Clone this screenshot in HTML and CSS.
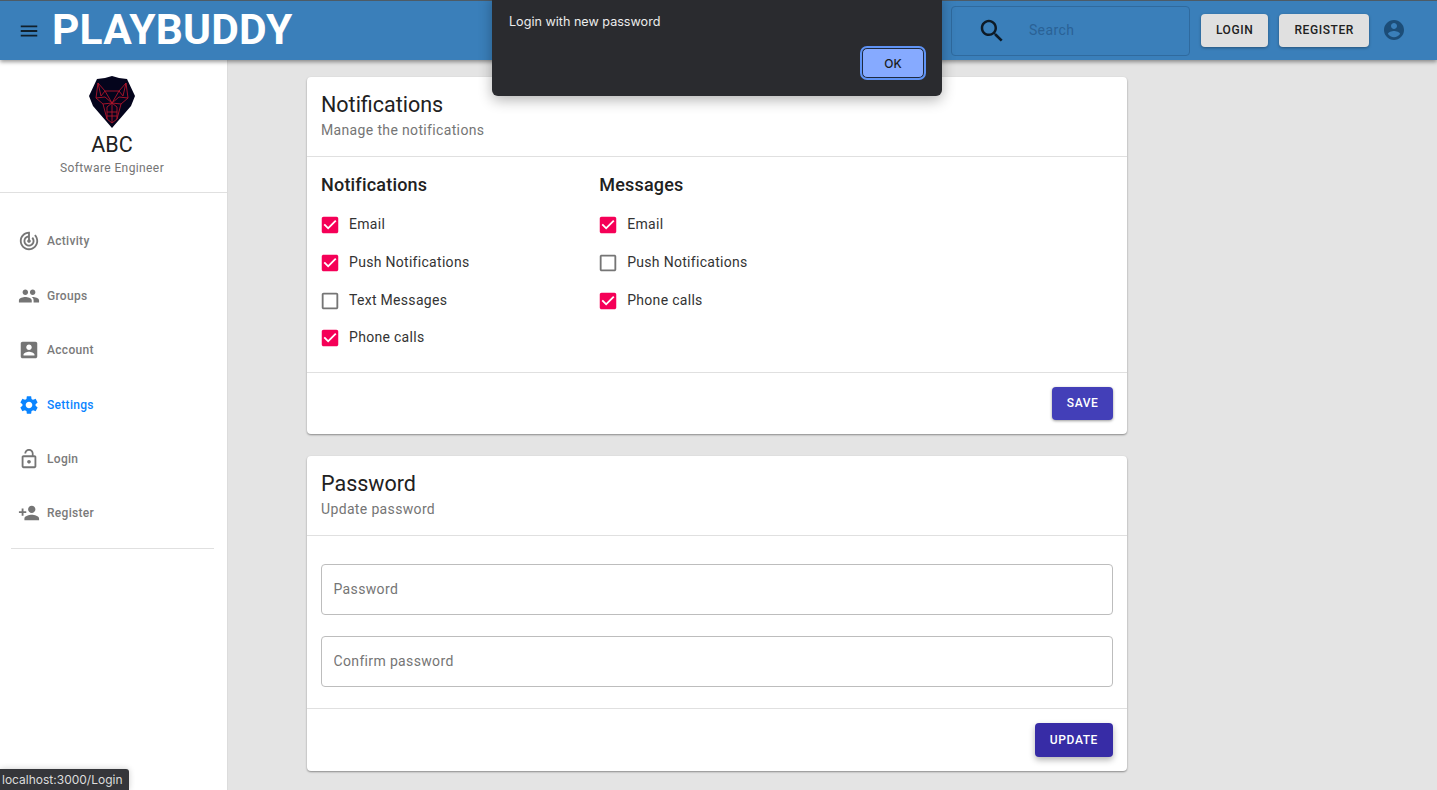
FILE: index.html
```html
<!doctype html>
<html>
<head>
  <title>Playbuddy</title>
  <meta charset="utf-8">
  <link rel="stylesheet" href="styles.css">
</head>
<body>
  <svg class="defs" width="0" height="0">
    <symbol id="i-menu" viewBox="0 0 24 24"><path d="M3 18h18v-2H3v2zm0-5h18v-2H3v2zm0-7v2h18V6H3z"/></symbol>
    <symbol id="i-search" viewBox="0 0 24 24"><path d="M15.5 14h-.79l-.28-.27C15.41 12.59 16 11.11 16 9.5 16 5.91 13.09 3 9.5 3S3 5.91 3 9.5 5.91 16 9.5 16c1.61 0 3.09-.59 4.23-1.57l.27.28v.79l5 4.99L20.49 19l-4.99-5zm-6 0C7.01 14 5 11.99 5 9.5S7.01 5 9.5 5 14 7.01 14 9.5 11.99 14 9.5 14z"/></symbol>
    <symbol id="i-user" viewBox="0 0 24 24"><path d="M12 2C6.48 2 2 6.48 2 12s4.48 10 10 10 10-4.48 10-10S17.52 2 12 2zm0 3c1.66 0 3 1.34 3 3s-1.34 3-3 3-3-1.34-3-3 1.34-3 3-3zm0 14.2c-2.5 0-4.71-1.28-6-3.22.03-1.99 4-3.08 6-3.08 1.99 0 5.97 1.09 6 3.08-1.29 1.94-3.5 3.22-6 3.22z"/></symbol>
    <symbol id="i-activity" viewBox="0 0 24 24"><path d="M19.07 4.93l-1.41 1.41C19.1 7.79 20 9.79 20 12c0 4.42-3.58 8-8 8s-8-3.58-8-8c0-4.08 3.05-7.44 7-7.93v2.02C8.16 6.57 6 9.03 6 12c0 3.31 2.69 6 6 6s6-2.69 6-6c0-1.66-.67-3.16-1.76-4.24l-1.41 1.41C15.55 9.9 16 10.9 16 12c0 2.21-1.79 4-4 4s-4-1.79-4-4c0-1.86 1.28-3.41 3-3.86v2.14c-.6.35-1 .98-1 1.72 0 1.1.9 2 2 2s2-.9 2-2c0-.74-.4-1.38-1-1.72V2h-1C6.48 2 2 6.48 2 12s4.48 10 10 10 10-4.48 10-10c0-2.76-1.12-5.26-2.93-7.07z"/></symbol>
    <symbol id="i-groups" viewBox="0 0 24 24"><path d="M16 11c1.66 0 2.99-1.34 2.99-3S17.66 5 16 5c-1.66 0-3 1.34-3 3s1.34 3 3 3zm-8 0c1.66 0 2.99-1.34 2.99-3S9.66 5 8 5C6.34 5 5 6.34 5 8s1.34 3 3 3zm0 2c-2.33 0-7 1.17-7 3.5V19h14v-2.5c0-2.33-4.67-3.5-7-3.5zm8 0c-.29 0-.62.02-.97.05 1.16.84 1.97 1.97 1.97 3.45V19h6v-2.5c0-2.33-4.67-3.5-7-3.5z"/></symbol>
    <symbol id="i-account" viewBox="0 0 24 24"><path d="M3 5v14c0 1.1.89 2 2 2h14c1.1 0 2-.9 2-2V5c0-1.1-.9-2-2-2H5c-1.11 0-2 .9-2 2zm12 4c0 1.66-1.34 3-3 3s-3-1.34-3-3 1.34-3 3-3 3 1.34 3 3zm-9 8c0-2 4-3.1 6-3.1s6 1.1 6 3.1v1H6v-1z"/></symbol>
    <symbol id="i-settings" viewBox="0 0 24 24"><path d="M19.14 12.94c.04-.3.06-.61.06-.94 0-.32-.02-.64-.07-.94l2.03-1.58c.18-.14.23-.41.12-.61l-1.92-3.32c-.12-.22-.37-.29-.59-.22l-2.39.96c-.5-.38-1.03-.7-1.62-.94l-.36-2.54c-.04-.24-.24-.41-.48-.41h-3.84c-.24 0-.43.17-.47.41l-.36 2.54c-.59.24-1.13.57-1.62.94l-2.39-.96c-.22-.08-.47 0-.59.22L2.74 8.87c-.12.21-.08.47.12.61l2.03 1.58c-.05.3-.09.63-.09.94s.02.64.07.94l-2.03 1.58c-.18.14-.23.41-.12.61l1.92 3.32c.12.22.37.29.59.22l2.39-.96c.5.38 1.03.7 1.62.94l.36 2.54c.05.24.24.41.48.41h3.84c.24 0 .44-.17.47-.41l.36-2.54c.59-.24 1.13-.56 1.62-.94l2.39.96c.22.08.47 0 .59-.22l1.92-3.32c.12-.22.07-.47-.12-.61l-2.01-1.58zM12 15.6c-1.98 0-3.6-1.62-3.6-3.6s1.62-3.6 3.6-3.6 3.6 1.62 3.6 3.6-1.62 3.6-3.6 3.6z"/></symbol>
    <symbol id="i-lock" viewBox="0 0 24 24"><path d="M18 8h-1V6c0-2.76-2.24-5-5-5S7 3.24 7 6h1.9c0-1.71 1.39-3.1 3.1-3.1 1.71 0 3.1 1.39 3.1 3.1v2H6c-1.1 0-2 .9-2 2v10c0 1.1.9 2 2 2h12c1.1 0 2-.9 2-2V10c0-1.1-.9-2-2-2zm0 12H6V10h12v10zm-6-3c1.1 0 2-.9 2-2s-.9-2-2-2-2 .9-2 2 .9 2 2 2z"/></symbol>
    <symbol id="i-register" viewBox="0 0 24 24"><path d="M15 12c2.21 0 4-1.79 4-4s-1.79-4-4-4-4 1.79-4 4 1.79 4 4 4zm-9-2V7H4v3H1v2h3v3h2v-3h3v-2H6zm9 4c-2.67 0-8 1.34-8 4v2h16v-2c0-2.66-5.33-4-8-4z"/></symbol>
    <symbol id="i-checked" viewBox="0 0 24 24"><path d="M19 3H5c-1.11 0-2 .9-2 2v14c0 1.1.89 2 2 2h14c1.11 0 2-.9 2-2V5c0-1.1-.89-2-2-2zm-9 14l-5-5 1.41-1.41L10 14.17l7.59-7.59L19 8l-9 9z"/></symbol>
    <symbol id="i-unchecked" viewBox="0 0 24 24"><path d="M19 5v14H5V5h14m0-2H5c-1.1 0-2 .9-2 2v14c0 1.1.9 2 2 2h14c1.1 0 2-.9 2-2V5c0-1.1-.9-2-2-2z"/></symbol>
  </svg>

  <header class="topbar">
    <svg class="menu-icon"><use href="#i-menu"/></svg>
    <div class="brand">PLAYBUDDY</div>
    <div class="search">
      <svg class="search-icon"><use href="#i-search"/></svg>
      <span class="search-text">Search</span>
    </div>
    <button class="top-btn">LOGIN</button>
    <button class="top-btn">REGISTER</button>
    <svg class="user-icon"><use href="#i-user"/></svg>
  </header>

  <div class="layout">
    <aside class="sidebar">
      <div class="profile">
        <svg class="logo" viewBox="0 0 46 52">
          <path class="logo-shield" d="M23 0 L30 2 L38 3 L46 20 L42 30 L23 52 L4 30 L0 20 L8 3 L16 2 Z"/>
          <g class="logo-lines">
            <path d="M9 7 L16 15 L30 15 L37 7 L39 22 L32 28 L28 43 L23 47 L18 43 L14 28 L7 22 Z"/>
            <path d="M9 7 L12 20 L16 15 L23 27 L30 15 L34 20 L37 7"/>
            <path d="M7 22 L16 21 L23 27 L30 21 L39 22"/>
            <path d="M14 28 L23 27 L32 28 M18 43 L18 31 L23 27 L28 31 L28 43 M23 27 L23 47 M18 36 L28 36 M18 40 L28 40"/>
          </g>
        </svg>
        <div class="profile-name">ABC</div>
        <div class="profile-role">Software Engineer</div>
      </div>
      <nav class="nav">
        <a class="nav-item"><svg class="nav-icon"><use href="#i-activity"/></svg>Activity</a>
        <a class="nav-item"><svg class="nav-icon"><use href="#i-groups"/></svg>Groups</a>
        <a class="nav-item"><svg class="nav-icon"><use href="#i-account"/></svg>Account</a>
        <a class="nav-item active"><svg class="nav-icon"><use href="#i-settings"/></svg>Settings</a>
        <a class="nav-item"><svg class="nav-icon"><use href="#i-lock"/></svg>Login</a>
        <a class="nav-item"><svg class="nav-icon"><use href="#i-register"/></svg>Register</a>
      </nav>
      <div class="nav-divider"></div>
    </aside>

    <main class="content">
      <section class="card">
        <div class="card-head">
          <h2>Notifications</h2>
          <p>Manage the notifications</p>
        </div>
        <div class="card-body options">
          <div class="option-col first">
            <h3>Notifications</h3>
            <label class="option"><svg class="box on"><use href="#i-checked"/></svg>Email</label>
            <label class="option"><svg class="box on"><use href="#i-checked"/></svg>Push Notifications</label>
            <label class="option"><svg class="box"><use href="#i-unchecked"/></svg>Text Messages</label>
            <label class="option"><svg class="box on"><use href="#i-checked"/></svg>Phone calls</label>
          </div>
          <div class="option-col">
            <h3>Messages</h3>
            <label class="option"><svg class="box on"><use href="#i-checked"/></svg>Email</label>
            <label class="option"><svg class="box"><use href="#i-unchecked"/></svg>Push Notifications</label>
            <label class="option"><svg class="box on"><use href="#i-checked"/></svg>Phone calls</label>
          </div>
        </div>
        <div class="card-foot">
          <button class="primary save">SAVE</button>
        </div>
      </section>

      <section class="card">
        <div class="card-head">
          <h2>Password</h2>
          <p>Update password</p>
        </div>
        <div class="card-body fields">
          <input class="field" placeholder="Password">
          <input class="field" placeholder="Confirm password">
        </div>
        <div class="card-foot">
          <button class="primary update">UPDATE</button>
        </div>
      </section>
    </main>
  </div>

  <div class="dialog">
    <div class="dialog-text">Login with new password</div>
    <button class="dialog-ok">OK</button>
  </div>
  <div class="status">localhost:3000/Login</div>
</body>
</html>
```

FILE: styles.css
```css
html, body {
  margin: 0;
  height: 100%;
  overflow: hidden;
}
body {
  font-family: Roboto, "Liberation Sans", sans-serif;
  background: #e4e4e4;
  color: #212121;
}
.defs {
  position: absolute;
}

/* top bar */
.topbar {
  position: relative;
  z-index: 2;
  display: flex;
  align-items: center;
  height: 59px;
  padding-right: 31px;
  background: #3a7fba;
  border-top: 1px solid #4d5b66;
  box-shadow: 0 2px 4px rgba(0, 0, 0, 0.4);
}
.menu-icon {
  width: 22px;
  height: 22px;
  margin-left: 18px;
  fill: #10202c;
}
.brand {
  margin-left: 12px;
  margin-top: -2px;
  font-size: 42.5px;
  font-weight: 700;
  letter-spacing: 0.2px;
  color: #fff;
}
.search {
  display: flex;
  align-items: center;
  box-sizing: border-box;
  width: 239px;
  height: 50px;
  margin-left: auto;
  border: 1px solid #2f6a9e;
  border-radius: 4px;
}
.search-icon {
  width: 30px;
  height: 30px;
  margin-left: 25px;
  fill: #0d1a26;
}
.search-text {
  margin: -1px 0 0 22px;
  font-size: 14px;
  letter-spacing: 0.4px;
  color: #2a6296;
}
.top-btn {
  height: 33px;
  margin-left: 11px;
  padding: 0 15px 1px;
  border: 0;
  border-radius: 4px;
  background: #e0e0e0;
  color: #212121;
  font-family: inherit;
  font-size: 12px;
  font-weight: 500;
  letter-spacing: 0.6px;
  box-shadow: 0 1px 3px rgba(0, 0, 0, 0.35);
}
.user-icon {
  width: 24px;
  height: 24px;
  margin: -1px 0 0 13px;
  fill: #1c4d78;
}

.layout {
  display: grid;
  grid-template-columns: 228px 1fr;
  height: calc(100% - 60px);
}

/* sidebar */
.sidebar {
  background: #fff;
  border-right: 1px solid #dcdcdc;
}
.profile {
  display: flex;
  flex-direction: column;
  align-items: center;
  height: 133px;
  box-sizing: border-box;
  padding: 16px 3px 0 0;
  border-bottom: 1px solid #e0e0e0;
}
.logo {
  width: 46px;
  height: 52px;
}
.logo-shield {
  fill: #04041c;
}
.logo-lines {
  fill: none;
  stroke: #b0142a;
  stroke-width: 0.9;
}
.profile-name {
  margin-top: 4px;
  font-size: 21.5px;
  line-height: 26px;
}
.profile-role {
  margin-top: 3px;
  font-size: 12px;
  letter-spacing: 0.4px;
  color: #757575;
}
.nav {
  padding-top: 21.2px;
}
.nav-item {
  display: flex;
  align-items: center;
  height: 54.4px;
  padding-left: 18px;
  font-size: 12px;
  font-weight: 500;
  letter-spacing: 0.3px;
  color: #7a7a7a;
}
.nav-icon {
  width: 22px;
  height: 22px;
  margin-right: 7px;
  fill: #757575;
}
.nav-item.active {
  color: #0a84ff;
}
.nav-item.active .nav-icon {
  fill: #0a84ff;
}
.nav-divider {
  height: 1px;
  margin: 7.4px 13px 0 11px;
  background: #e0e0e0;
}

/* cards */
.content {
  width: 820px;
  margin-left: 79px;
  padding-top: 17px;
}
.card {
  margin-bottom: 22px;
  background: #fff;
  border-radius: 4px;
  box-shadow: 0 1px 2px rgba(0, 0, 0, 0.4);
}
.card-head {
  height: 80px;
  box-sizing: border-box;
  padding: 14px 14px 0;
  border-bottom: 1px solid #e0e0e0;
}
.card-head h2 {
  margin: 0;
  font-size: 21.5px;
  font-weight: 400;
  line-height: 28px;
}
.card-head p {
  margin: 3px 0 0;
  font-size: 14px;
  letter-spacing: 0.35px;
  color: #757575;
}
.options {
  display: flex;
  height: 215px;
  box-sizing: border-box;
  padding: 17px 14px 0;
}
.option-col.first {
  width: 278.2px;
}
.option-col h3 {
  margin: 0 0 9.4px;
  font-size: 18px;
  font-weight: 500;
  letter-spacing: 0.2px;
  line-height: 22px;
}
.option {
  display: flex;
  align-items: center;
  height: 37.7px;
  font-size: 14px;
  letter-spacing: 0.3px;
  color: #333;
}
.box {
  width: 22px;
  height: 22px;
  margin: 2px 8px 0 -2px;
  fill: #757575;
}
.box.on {
  fill: #f50057;
}
.fields {
  display: flex;
  flex-direction: column;
  gap: 21px;
  height: 172px;
  box-sizing: border-box;
  padding: 28px 14px 0;
}
.field {
  height: 51px;
  box-sizing: border-box;
  padding: 0 11.5px 2px;
  border: 1px solid #bdbdbd;
  border-radius: 4px;
  font-family: inherit;
  font-size: 14px;
  letter-spacing: 0.35px;
}
.field::placeholder {
  color: #757575;
  opacity: 1;
}
.card-foot {
  display: flex;
  justify-content: flex-end;
  padding: 14px;
  border-top: 1px solid #e0e0e0;
}
.primary {
  height: 33px;
  padding: 0 15px;
  border: 0;
  border-radius: 4px;
  color: #fff;
  font-family: inherit;
  font-size: 12px;
  font-weight: 500;
  letter-spacing: 0.6px;
  box-shadow: 0 1px 3px rgba(0, 0, 0, 0.4);
}
.save {
  padding: 0 14.5px 2px;
  background: #433fb8;
}
.update {
  height: 34px;
  background: #372ca6;
  box-shadow: 0 3px 6px rgba(0, 0, 0, 0.3);
}

/* browser alert + status bubble sit over the page */
.dialog {
  position: absolute;
  z-index: 5;
  top: -6px;
  left: 492px;
  width: 450px;
  height: 102px;
  background: #2a2b2f;
  border-radius: 0 0 6px 6px;
  box-shadow: 0 4px 14px rgba(0, 0, 0, 0.3);
}
.dialog-text {
  position: absolute;
  top: 20px;
  left: 17px;
  font-family: Inter, "Liberation Sans", sans-serif;
  font-size: 12.6px;
  color: #ececec;
}
.dialog-ok {
  position: absolute;
  top: 54px;
  left: 370px;
  width: 62px;
  height: 30px;
  box-sizing: border-box;
  padding: 0;
  border: 1px solid #1e2a40;
  border-radius: 5px;
  outline: 2px solid #5f93f5;
  background: #86aaff;
  color: #1a1c22;
  font-family: Inter, "Liberation Sans", sans-serif;
  font-size: 12px;
  font-weight: 500;
}
.status {
  position: absolute;
  z-index: 5;
  left: 0;
  bottom: 0;
  height: 21px;
  padding: 0 6px 0 2px;
  line-height: 21px;
  background: #35363a;
  border-radius: 0 3px 0 0;
  font-family: Inter, "Liberation Sans", sans-serif;
  font-size: 12px;
  color: #dcdcdc;
  box-shadow: 0 0 6px rgba(0, 0, 0, 0.2);
}
```
